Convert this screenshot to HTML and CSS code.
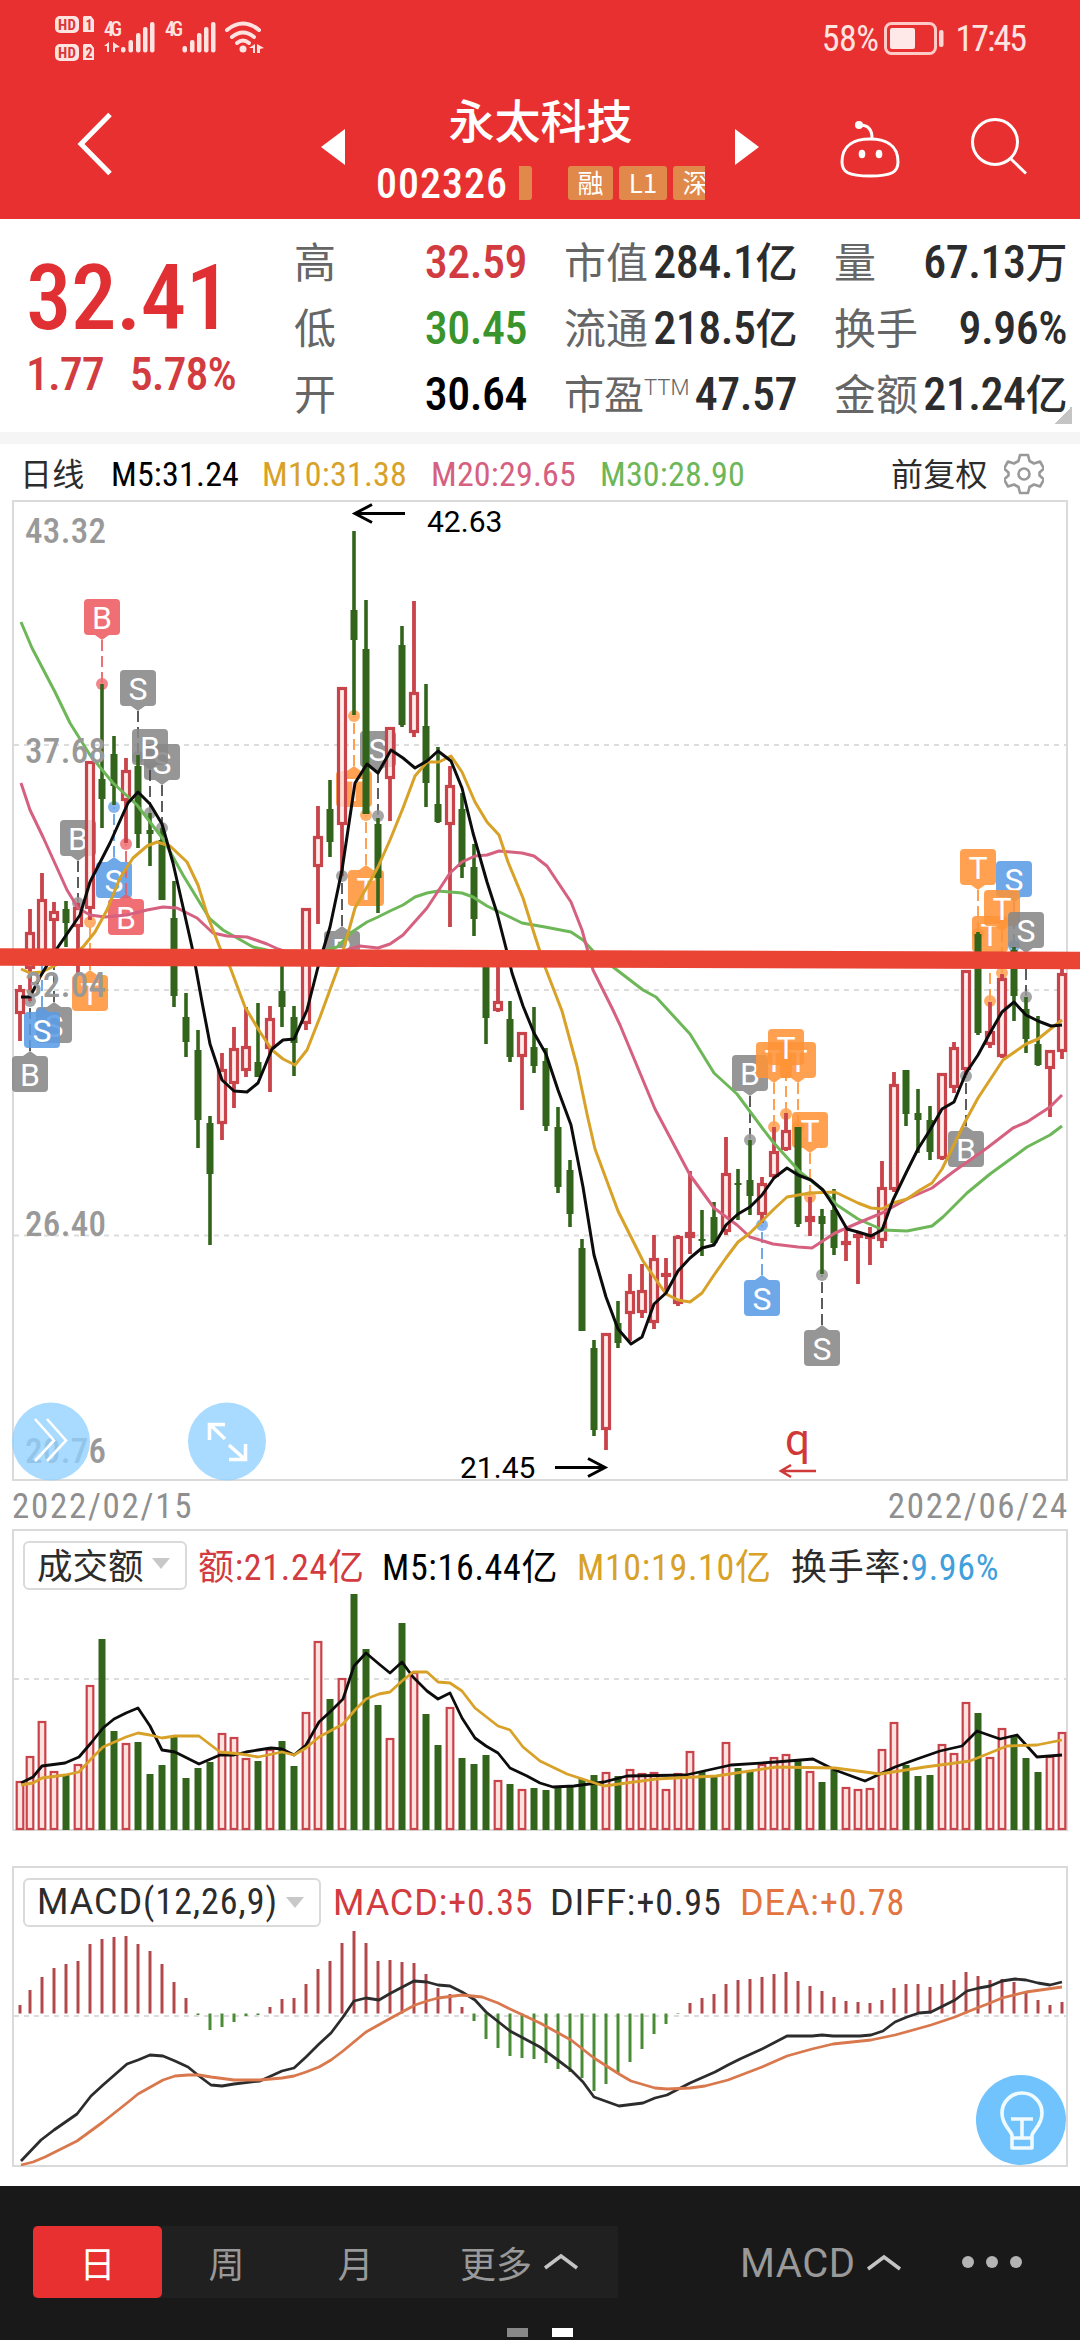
FILE: index.html
```html
<!DOCTYPE html>
<html lang="zh-CN">
<head>
    <meta charset="UTF-8">
    <meta name="viewport" content="width=device-width, initial-scale=1.0">
    <title>永太科技 002326</title>
    <link rel="stylesheet" href="styles.css">
</head>
<body>
    <header class="header">
        <div class="status">
            <svg class="status_left" width="220" height="56" viewBox="50 10 220 56">
                <g fill="#ffe3e0">
                    <rect x="55" y="16" width="24" height="17" rx="5"/>
                    <path d="M84 16h7l3 4v12h-11v-15z"/>
                    <rect x="55" y="44" width="24" height="17" rx="5"/>
                    <path d="M84 44h7l3 4v12h-11v-15z"/>
                    <rect x="121" y="47" width="4.5" height="5.5" rx="2"/>
                    <rect x="128.500" y="40" width="4.500" height="12.500" rx="2"/>
                    <rect x="136" y="33" width="4.500" height="19.500" rx="2"/>
                    <rect x="143" y="27" width="4.500" height="25.500" rx="2"/>
                    <rect x="150" y="22" width="4.500" height="30.500" rx="2"/>
                    <rect x="182.500" y="46" width="4.500" height="6.500" rx="2"/>
                    <rect x="190" y="40" width="4.500" height="12.500" rx="2"/>
                    <rect x="197" y="33" width="4.500" height="19.500" rx="2"/>
                    <rect x="204" y="27" width="4.500" height="25.500" rx="2"/>
                    <rect x="211" y="22" width="4.500" height="30.500" rx="2"/>
                    <circle cx="243" cy="49" r="3.500"/>
                    <path d="M109 42v10h-2v-6h-3zM113 42l7 5-5 1v4h-2z"/>
                    <path d="M255 44v9h-2v-5h-4zM257 44l7 4-4 1v4h-3z"/>
                </g>
                <g fill="none" stroke="#ffe3e0" stroke-width="4" stroke-linecap="round">
                    <path d="M227 30q16-13 32 0"/>
                    <path d="M232 37q11-9 22 0"/>
                    <path d="M237 43q6-5 12 0"/>
                </g>
                <g class="badge_text">
                    <text x="58" y="30" textLength="18">HD</text>
                    <text x="85.500" y="30" font-size="14">1</text>
                    <text x="58" y="58" textLength="18">HD</text>
                    <text x="85.500" y="58" font-size="14">2</text>
                </g>
                <g class="net_text">
                    <text x="104" y="36" textLength="18">4G</text>
                    <text x="165" y="36" textLength="18">4G</text>
                </g>
            </svg>
            <div class="status_right">
                <span class="percent">58%</span>
                <svg width="60" height="34" viewBox="0 0 60 34">
                    <rect x="1.500" y="2.500" width="50" height="30" rx="6" fill="none" stroke="#ffc9c6" stroke-width="3"/>
                    <rect x="6" y="7" width="25" height="21" rx="2" fill="#ffe8e8"/>
                    <rect x="55" y="9" width="4.500" height="17" rx="2" fill="#ffd6d3"/>
                </svg>
                <span class="clock">17:45</span>
            </div>
        </div>
        <div class="title_bar">
            <svg class="back" width="36" height="64" viewBox="0 0 36 64"><path d="M33 2.500L4 32l29 29.500" fill="none" stroke="#fff" stroke-width="5"/></svg>
            <svg class="prev" width="24" height="36" viewBox="0 0 24 36"><path d="M24 0v36L0 18z" fill="#fff"/></svg>
            <div class="stock">
                <h1>永太科技</h1>
                <div class="code_row">
                    <span class="code">002326</span>
                    <i class="tag_end"></i>
                    <span class="tag">融</span>
                    <span class="tag tag_l1">L1</span>
                    <span class="tag tag_cut">深</span>
                </div>
            </div>
            <svg class="next" width="24" height="36" viewBox="0 0 24 36"><path d="M0 0v36l24-18z" fill="#fff"/></svg>
            <svg class="robot" width="62" height="60" viewBox="0 0 62 60">
                <path d="M31 20c14 0 28 5 28 23 0 10-6 14-28 14S3 53 3 43c0-18 14-23 28-23z" fill="none" stroke="#fff" stroke-width="3"/>
                <path d="M21 6c8 0 12 4 12 13" fill="none" stroke="#fff" stroke-width="3"/>
                <circle cx="20" cy="6" r="4" fill="#fff"/>
                <ellipse cx="23" cy="35" rx="3.300" ry="4.300" fill="#fff"/>
                <ellipse cx="40" cy="35" rx="3.300" ry="4.300" fill="#fff"/>
            </svg>
            <svg class="search" width="58" height="58" viewBox="0 0 58 58"><g fill="none" stroke="#fff" stroke-width="3"><circle cx="25" cy="25" r="22.500"/><path d="M40.500 41.500L56 56.500"/></g></svg>
        </div>
    </header>

    <section class="quote">
        <div class="price_box">
            <div class="price">32.41</div>
            <div class="change"><span>1.77</span><span>5.78%</span></div>
        </div>
        <dl class="quote_col">
            <div><dt>高</dt><dd class="red">32.59</dd></div>
            <div><dt>低</dt><dd class="green">30.45</dd></div>
            <div><dt>开</dt><dd class="black">30.64</dd></div>
        </dl>
        <dl class="quote_col">
            <div><dt>市值</dt><dd>284.1<i>亿</i></dd></div>
            <div><dt>流通</dt><dd>218.5<i>亿</i></dd></div>
            <div><dt class="pe">市盈<sup>TTM</sup></dt><dd>47.57</dd></div>
        </dl>
        <dl class="quote_col">
            <div><dt>量</dt><dd>67.13<i>万</i></dd></div>
            <div><dt>换手</dt><dd>9.96%</dd></div>
            <div><dt>金额</dt><dd>21.24<i>亿</i></dd></div>
        </dl>
        <div class="corner"></div>
    </section>

    <div class="ma_row">
        <span class="cjk">日线</span>
        <span class="black">M5:31.24</span>
        <span class="gold">M10:31.38</span>
        <span class="pink">M20:29.65</span>
        <span class="lime">M30:28.90</span>
        <span class="cjk">前复权</span>
        <svg width="40" height="42" viewBox="-20 -21 40 42">
            <path d="M-4-19h8l1.500 6 4.500 2.500 6-2 4 7-4.500 4v3l4.500 4-4 7-6-2-4.500 2.500L4 19h-8l-1.500-6-4.500-2.500-6 2-4-7 4.500-4v-3l-4.500-4 4-7 6 2 4.500-2.500z" fill="none" stroke="#999" stroke-width="2.600" stroke-linejoin="round"/>
            <circle r="5.500" fill="none" stroke="#999" stroke-width="2.600"/>
        </svg>
    </div>

    <svg id="kline" class="kline" width="1080" height="986" viewBox="0 500 1080 986"></svg>

    <div class="dates"><span>2022/02/15</span><span>2022/06/24</span></div>

    <section class="panel volume">
        <svg id="volume" width="1080" height="304" viewBox="0 1529 1080 304"></svg>
        <div class="panel_head">
            <span class="select cjk">成交额<b class="caret"></b></span>
            <span class="v1 red">额:21.24亿</span>
            <span class="v2 black">M5:16.44亿</span>
            <span class="v3 gold">M10:19.10亿</span>
            <span class="v4">换手率:<em>9.96%</em></span>
        </div>
    </section>

    <section class="panel macd">
        <svg id="macd" width="1080" height="303" viewBox="0 1865 1080 303"></svg>
        <div class="panel_head">
            <span class="select"><span class="wide">MACD</span>(12,26,9)<b class="caret"></b></span>
            <span class="m1 red"><span class="wide">MACD:</span>+0.35</span>
            <span class="m2"><span class="wide">DIFF:</span>+0.95</span>
            <span class="m3 orange"><span class="wide">DEA:</span>+0.78</span>
        </div>
    </section>

    <footer class="footer">
        <div class="periods">
            <span class="period active">日</span>
            <span class="period">周</span>
            <span class="period">月</span>
            <span class="period more">更多<svg width="36" height="18" viewBox="0 0 36 18"><path d="M2 15L18 3l16 12" fill="none" stroke="#c4c4c4" stroke-width="3.500"/></svg></span>
        </div>
        <span class="indicator">MACD<svg width="36" height="18" viewBox="0 0 36 18"><path d="M2 15L18 3l16 12" fill="none" stroke="#c4c4c4" stroke-width="3.500"/></svg></span>
        <div class="dots"><i></i><i></i><i></i></div>
        <div class="pager"><i></i><i class="on"></i></div>
    </footer>

    <script>
        // candles: colour, high, body top, body bottom, low
        const candles = [
            ["r",985,989,1014,1041],["r",909,932,969,1001],["r",873,899,958,960],["r",902,911,921,960],["g",901,909,923,947],
            ["r",903,907,927,973],["r",761,761,909,920],["g",684,779,799,828],["g",736,754,786,805],["r",758,770,801,843],
            ["g",755,766,834,848],["g",813,830,834,866],["g",828,840,900,900],["g",881,918,996,1007],["g",993,1017,1042,1057],
            ["g",1030,1050,1120,1148],["g",1116,1123,1174,1245],["r",1053,1069,1124,1140],["r",1027,1048,1084,1108],["r",1007,1046,1071,1077],
            ["g",1003,1062,1077,1077],["r",1006,1018,1049,1092],["g",955,991,1007,1027],["g",1006,1017,1043,1076],["r",908,908,1024,1030],
            ["r",806,836,867,924],["g",780,809,842,857],["r",687,687,825,876],["g",531,610,640,715],["g",600,649,814,814],
            ["g",818,824,878,913],["r",727,727,779,821],["g",626,645,725,727],["r",601,692,733,737],["g",684,726,783,807],
            ["g",747,804,822,823],["r",766,785,825,927],["g",793,809,867,878],["g",844,867,919,936],["g",950,955,1018,1044],
            ["r",955,1001,1011,1012],["g",1001,1019,1057,1062],["r",1032,1032,1057,1110],["g",1007,1047,1066,1073],["g",1048,1061,1126,1131],
            ["g",1107,1127,1187,1193],["g",1160,1170,1214,1227],["g",1239,1248,1331,1331],["g",1340,1348,1430,1436],["r",1333,1333,1430,1450],
            ["g",1301,1323,1343,1348],["r",1274,1291,1314,1341],["r",1264,1290,1313,1318],["r",1235,1258,1323,1329],["r",1258,1273,1277,1291],
            ["r",1235,1236,1304,1306],["r",1171,1232,1238,1254],["g",1210,1239,1241,1256],["g",1202,1217,1243,1244],["r",1137,1173,1232,1235],
            ["g",1169,1183,1185,1220],["g",1140,1180,1196,1215],["r",1177,1183,1215,1223],["r",1127,1151,1177,1178],["r",1113,1130,1150,1151],
            ["g",1127,1127,1224,1227],["r",1197,1216,1222,1236],["g",1209,1216,1224,1274],["g",1189,1210,1248,1255],["r",1228,1241,1243,1261],
            ["r",1233,1234,1237,1284],["r",1227,1234,1239,1265],["r",1161,1187,1241,1248],["r",1072,1084,1190,1192],["g",1070,1070,1114,1126],
            ["g",1089,1113,1120,1153],["g",1106,1120,1152,1160],["r",1073,1073,1159,1160],["r",1042,1047,1088,1093],["r",970,970,1070,1075],
            ["g",932,934,1033,1035],["r",1002,1031,1045,1048],["r",974,978,1057,1058],["g",947,950,996,1021],["g",997,1009,1039,1053],
            ["g",1016,1044,1065,1066],["r",1050,1050,1069,1117],["r",968,973,1052,1059]
        ];
        // markers: letter, colour, x, box top, dot y
        const marks = [
            ["B","#878787",30,1056,1001],["S","#878787",54,1007,960],["S","#5a9ce6",42,1012,960],["T","#ff9437",90,975,922],
            ["B","#878787",78,820,903],["B","#ee5a60",102,599,684],["S","#5a9ce6",114,862,807],["B","#ee5a60",126,899,844],
            ["S","#878787",138,670,757],["S","#878787",162,744,828],["B","#878787",150,729,813],
            ["B","#878787",342,931,876],["T","#ff9437",354,771,716],["T","#ff9437",366,870,815],["S","#878787",378,731,816],
            ["B","#878787",750,1055,1140],["S","#5a9ce6",762,1280,1225],["T","#ff9437",774,1042,1127],["T","#ff9437",798,1042,1127],
            ["T","#ff9437",786,1029,1114],["T","#ff9437",810,1112,1197],["S","#878787",822,1330,1275],
            ["B","#878787",966,1131,1076],["T","#ff9437",978,849,934],["S","#5a9ce6",1014,861,946],["T","#ff9437",990,916,1001],
            ["T","#ff9437",1002,890,973],["S","#878787",1026,912,997]
        ];
        const ma = {
            "#6db758": "21,622 32,648 55,692 70,723 90,755 113,783 137,805 163,839 183,875 200,903 210,919 223,930 253,947 290,955 320,952 337,947 352,932 367,922 378,917 390,911 403,905 415,897 427,893 438,891 462,893 473,897 487,906 522,923 545,927 571,932 583,940 593,951 613,967 643,990 656,997 690,1034 714,1073 737,1094 760,1125 773,1142 800,1172 823,1190 837,1205 858,1219 883,1230 907,1231 932,1226 943,1217 967,1193 990,1174 1027,1147 1050,1135 1062,1126",
            "#d6607f": "21,783 30,810 43,837 67,890 78,908 90,915 105,917 127,915 147,910 163,907 177,908 197,918 213,933 227,936 247,937 267,944 278,949 300,957 330,955 360,946 378,948 390,944 403,935 427,908 450,873 462,862 475,856 487,855 499,851 522,853 534,856 547,866 571,902 582,930 593,970 612,1008 620,1025 655,1109 690,1175 714,1208 737,1225 750,1237 773,1244 798,1247 812,1248 835,1233 858,1223 882,1213 907,1199 932,1188 953,1172 987,1148 1013,1128 1027,1122 1050,1107 1062,1095",
            "#d8a127": "21,969 30,973 42,972 50,968 66,960 83,947 95,932 107,910 120,878 133,858 147,846 157,842 170,846 187,862 198,885 208,917 220,948 230,967 245,1007 260,1032 272,1050 283,1059 295,1065 307,1050 320,1017 338,968 347,937 355,908 367,887 378,867 390,840 403,808 415,776 427,762 439,762 451,756 462,772 475,802 487,822 499,835 508,862 523,898 533,930 545,967 562,1011 577,1066 587,1114 595,1149 618,1211 643,1261 666,1294 678,1300 690,1302 702,1293 714,1275 726,1258 738,1242 750,1233 774,1209 787,1197 810,1193 835,1192 858,1203 871,1208 882,1209 893,1203 907,1199 920,1190 932,1183 942,1169 948,1157 965,1122 978,1098 1003,1060 1026,1044 1038,1039 1053,1027 1062,1020",
            "#0c0c0c": "21,997 30,997 40,977 58,947 80,915 90,882 110,843 128,803 138,792 150,804 162,824 173,863 183,907 192,947 202,1002 210,1044 222,1080 234,1091 247,1092 258,1083 272,1049 283,1040 294,1039 307,1010 318,967 330,927 342,870 355,783 367,764 378,773 391,750 403,758 415,768 427,761 438,751 451,761 462,788 473,833 487,882 497,913 506,948 512,973 523,1006 534,1033 546,1054 558,1090 571,1125 583,1187 594,1255 606,1297 618,1329 631,1344 642,1337 654,1304 666,1293 678,1271 690,1258 702,1248 714,1245 726,1225 738,1214 750,1207 762,1195 774,1178 787,1168 798,1175 811,1180 823,1190 835,1208 847,1229 858,1232 871,1236 882,1230 893,1200 906,1173 918,1149 930,1130 942,1109 954,1102 966,1073 978,1055 990,1033 1002,1012 1014,1002 1026,1015 1038,1021 1051,1026 1062,1025"
        };
        const vol = [1782,1757,1722,1772,1774,1765,1686,1639,1731,1744,1742,1774,1765,1736,1778,1768,1762,1734,1738,1759,1761,1750,
            1741,1766,1713,1642,1699,1679,1594,1649,1705,1739,1623,1673,1714,1745,1708,1758,1764,1755,1781,1784,1790,1788,
            1790,1788,1785,1779,1775,1773,1776,1770,1774,1773,1790,1774,1752,1772,1776,1743,1768,1770,1765,1758,1755,1760,
            1772,1782,1770,1788,1790,1789,1750,1723,1765,1776,1775,1745,1754,1703,1713,1758,1729,1735,1758,1772,1757,1733];
        const volMa = {
            "#0c0c0c": "21,1783 33,1777 42,1766 65,1763 79,1757 91,1743 103,1728 114,1719 126,1713 138,1708 150,1726 162,1750 175,1752 199,1764 220,1755 234,1755 246,1752 258,1750 271,1748 282,1749 294,1755 306,1745 319,1722 331,1711 343,1699 354,1666 366,1653 379,1664 390,1673 402,1662 413,1677 427,1691 438,1699 450,1693 462,1718 475,1738 486,1746 498,1753 510,1768 527,1776 540,1783 553,1787 574,1786 604,1782 627,1776 686,1775 731,1765 776,1762 813,1759 835,1770 865,1781 895,1767 917,1759 940,1751 962,1746 977,1731 1000,1739 1017,1735 1037,1757 1062,1755",
            "#d8a127": "21,1785 33,1783 42,1778 65,1775 79,1772 91,1759 103,1747 126,1737 138,1733 150,1735 162,1738 175,1736 199,1736 220,1752 241,1754 258,1757 282,1752 294,1755 306,1748 319,1737 343,1724 355,1710 366,1699 379,1694 390,1692 402,1681 413,1672 427,1672 438,1682 450,1683 462,1691 475,1708 498,1726 510,1730 523,1747 540,1761 567,1774 604,1786 656,1779 716,1776 776,1767 835,1768 880,1774 925,1767 970,1761 1007,1746 1037,1745 1062,1740"
        };
        const macd = [2005,1990,1977,1968,1964,1961,1944,1939,1937,1936,1944,1951,1964,1982,1998,2015,2030,2027,2022,2016,2015,2007,
            1999,1998,1984,1969,1961,1943,1931,1943,1961,1960,1962,1963,1974,1988,1994,2007,2021,2039,2048,2056,2058,2059,
            2063,2069,2072,2078,2091,2084,2074,2062,2049,2034,2024,2014,2003,1998,1994,1984,1980,1979,1977,1974,1972,1981,
            1986,1991,1997,2001,2002,2003,2000,1988,1984,1984,1987,1984,1980,1972,1976,1980,1979,1982,1991,2000,2005,2002];
        const macdLines = {
            "#2c2c2c": "21,2161 41,2140 54,2130 77,2114 91,2096 103,2085 127,2064 138,2060 150,2055 163,2056 175,2061 188,2067 199,2076 211,2085 222,2086 234,2084 260,2081 282,2071 294,2068 306,2057 319,2044 331,2033 343,2017 354,2001 366,1998 379,2000 391,1993 414,1981 427,1982 438,1985 450,1986 462,1992 475,2000 486,2012 510,2031 540,2047 559,2061 571,2070 583,2082 594,2097 619,2106 643,2103 655,2098 667,2095 690,2083 715,2072 728,2065 740,2059 762,2049 787,2036 812,2036 822,2035 833,2036 860,2036 871,2035 883,2031 895,2022 907,2017 919,2013 931,2012 955,2000 967,1991 979,1988 990,1986 1002,1981 1015,1979 1026,1980 1038,1983 1050,1985 1062,1982",
            "#d9774d": "21,2165 33,2162 45,2157 77,2141 103,2122 127,2103 138,2094 163,2080 175,2076 188,2075 199,2075 211,2077 234,2080 260,2080 282,2078 294,2076 306,2072 319,2067 331,2060 343,2051 366,2032 391,2018 415,2005 427,2001 438,1998 462,1995 482,1997 498,2003 510,2009 540,2023 571,2040 594,2058 619,2074 631,2081 655,2088 667,2089 690,2088 705,2086 728,2080 762,2067 787,2056 812,2049 833,2044 871,2040 895,2035 931,2025 955,2017 967,2012 990,2003 1002,1998 1026,1992 1062,1987"
        };

        const RED = "#c9434a";
        const GREEN = "#32651b";

        function xAt(i) {
            return i === 0 ? 20 : 18 + 12 * i;
        }
        function lines(set, width) {
            let s = "";
            for (const color in set) {
                s += `<polyline points="${set[color]}" fill="none" stroke="${color}" stroke-width="${width}" stroke-linejoin="round"/>`;
            }
            return s;
        }
        function dash(y) {
            return `<path d="M14 ${y}H1066" stroke="#dcdcdc" stroke-width="2" stroke-dasharray="5 5"/>`;
        }
        function frame(y1, y2) {
            return `<rect x="13" y="${y1}" width="1054" height="${y2 - y1}" fill="none" stroke="#dadada" stroke-width="2"/>`;
        }

        // candlestick chart
        let k = frame(501, 1480) + dash(745) + dash(990) + dash(1235.5);
        marks.forEach(([letter, color, x, top, dot]) => {
            const down = dot > top;
            const tip = down ? `M${x - 7} ${top + 36}h14l-7 5z` : `M${x - 7} ${top}h14l-7-5z`;
            const from = down ? top + 41 : top - 5;
            k += `<g opacity="0.87"><path d="M${x} ${from}V${dot}" stroke="${color === "#878787" ? "#444" : color}" stroke-width="2" stroke-dasharray="11 5"/>`;
            k += `<circle cx="${x}" cy="${dot}" r="6" fill="${color}" opacity="0.85"/>`;
            k += `<rect x="${x - 18}" y="${top}" width="36" height="36" rx="4" fill="${color}"/><path d="${tip}" fill="${color}"/></g>`;
            k += `<text class="mark" x="${x}" y="${top + 30}">${letter}</text>`;
        });
        candles.forEach(([c, high, top, bottom, low], i) => {
            const x = xAt(i);
            if (c === "g") {
                k += `<path d="M${x} ${high}V${low}" stroke="${GREEN}" stroke-width="3.6"/>`;
                k += `<rect x="${x - 3.5}" y="${top}" width="7" height="${bottom - top}" fill="${GREEN}"/>`;
            } else {
                k += `<path d="M${x} ${high}V${top}M${x} ${bottom}V${low}" stroke="${RED}" stroke-width="3.8"/>`;
                k += `<rect x="${x - 3.5}" y="${top + 1.5}" width="7" height="${Math.max(bottom - top - 3, 1)}" fill="#ffe9e6" fill-opacity="0.8" stroke="${RED}" stroke-width="3.2"/>`;
            }
        });
        k += lines(ma, 3);
        [["43.32", 543], ["37.68", 763], ["32.04", 997], ["26.40", 1236], ["20.76", 1463]].forEach(([t, y]) => {
            k += `<text class="axis" x="25" y="${y}" textLength="81">${t}</text>`;
        });
        k += `<g fill="none" stroke="#000" stroke-width="3"><path d="M405 513.500H355M372 504.500L355 513.500L372 522.500"/><path d="M555 1467.500H605M588 1458.500L605 1467.500L588 1476.500"/></g>`;
        k += `<text class="peak" x="427" y="532">42.63</text><text class="peak" x="460" y="1478">21.45</text>`;
        k += `<text class="q" x="785" y="1455">q</text><path d="M816 1471H781M791 1465L781 1471L791 1477" fill="none" stroke="#cf3a38" stroke-width="2.6"/>`;
        k += `<path d="M0 957L1080 960.500" stroke="#ea4435" stroke-width="17.500"/>`;
        k += `<circle cx="51" cy="1441.500" r="39" fill="#8fd1ff" fill-opacity="0.78"/><path d="M35 1419L54 1440.500L35 1461M47 1419L66 1440.500L47 1461" fill="none" stroke="#fff" stroke-width="2.6"/>`;
        k += `<circle cx="227" cy="1441.500" r="39" fill="#8fd1ff" fill-opacity="0.78"/><path d="M225 1439L210 1424.500M209.500 1440V1424.500H225M229 1445L245 1459.500M245.500 1444V1459.500H229" fill="none" stroke="#fff" stroke-width="3.6"/>`;
        document.getElementById("kline").innerHTML = k;

        // turnover bars
        let v = frame(1530, 1830) + dash(1679);
        vol.forEach((top, i) => {
            const x = xAt(i);
            if (candles[i][0] === "g") {
                v += `<rect x="${x - 3.5}" y="${top}" width="7" height="${1830 - top}" fill="${GREEN}"/>`;
            } else {
                v += `<rect x="${x - 3.3}" y="${top}" width="6.6" height="${1829 - top}" fill="#ffe2de" stroke="${RED}" stroke-width="2.2"/>`;
            }
        });
        document.getElementById("volume").innerHTML = v + lines(volMa, 2.8);

        // macd histogram
        let m = frame(1867, 2166) + dash(2016);
        macd.forEach((y, i) => {
            const color = y < 2013 ? "#b3484c" : "#4a8c35";
            m += `<path d="M${xAt(i)} 2013.500V${y}" stroke="${color}" stroke-width="3"/>`;
        });
        m += lines(macdLines, 2.8);
        m += `<circle cx="1021" cy="2120" r="45" fill="#70c3fd"/>`;
        m += `<path d="M1012 2148V2135C1010 2129 1002 2125 1002 2113A20 20 0 0 1 1042 2113C1042 2125 1034 2129 1032 2135V2148ZM1012 2138H1032M1022 2138V2119M1011 2119H1033" fill="none" stroke="#effbff" stroke-width="3.6" stroke-linejoin="round"/>`;
        document.getElementById("macd").innerHTML = m;
    </script>
</body>
</html>
```
FILE: styles.css
```css
* {
    box-sizing: border-box;
}
html, body {
    margin: 0;
    padding: 0;
}
body {
    width: 1080px;
    height: 2340px;
    display: flex;
    flex-direction: column;
    background-color: #fff;
    color: #2c2c2c;
    font-family: "Roboto Condensed", "Noto Sans CJK SC", sans-serif;
    overflow: hidden;
}
svg {
    display: block;
    flex: none;
}
i, em {
    font-style: normal;
}
.cjk {
    font-family: "Noto Sans CJK SC", sans-serif;
}
.wide {
    font-family: Roboto, sans-serif;
}
.red { color: #d23b3f; }
.green { color: #3a942c; }
.black { color: #000; }
.gold { color: #d8a127; }
.pink { color: #d6607f; }
.lime { color: #6db758; }
.orange { color: #e2753f; }

/* header */
.header {
    height: 219px;
    background-color: #e83030;
    color: #fff;
}
.status {
    display: flex;
    justify-content: space-between;
    height: 72px;
    padding: 10px 55px 0 50px;
}
.status_right {
    display: flex;
    align-items: center;
    height: 56px;
    font-size: 36px;
    color: #ffe3e0;
}
.percent {
    letter-spacing: -0.500px;
    margin: 2px 5px 0 0;
}
.clock {
    margin: 2px 0 0 12px;
    letter-spacing: -2px;
}
.badge_text {
    font-size: 15px;
    font-weight: 700;
    fill: #d9383a;
}
.net_text {
    font-size: 20px;
    font-weight: 500;
    fill: #ffe3e0;
}
.title_bar {
    display: flex;
    height: 147px;
    padding-left: 77px;
}
.back { margin-top: 40px; }
.prev { margin: 57px 0 0 208px; }
.next { margin: 57px 0 0 30px; }
.robot { margin: 47px 0 0 80px; }
.search { margin: 45px 0 0 69px; }
.stock {
    width: 329px;
    margin-left: 31px;
    overflow: hidden;
}
h1 {
    margin: 14px 0 0;
    line-height: 64px;
    font-family: "Noto Sans CJK SC", sans-serif;
    font-size: 46px;
    font-weight: 500;
    text-align: center;
}
.code_row {
    display: flex;
    align-items: center;
    height: 50px;
    margin-top: 8px;
}
.code {
    flex: none;
    width: 143px;
    font-size: 42px;
    font-weight: 500;
    letter-spacing: 1px;
}
.tag_end {
    flex: none;
    width: 13px;
    height: 34px;
    margin-right: 36px;
    background-color: #e0894a;
    border-radius: 0 3px 3px 0;
}
.tag {
    flex: none;
    width: 45px;
    height: 34px;
    margin-right: 6px;
    border-radius: 3px;
    background-color: #e0894a;
    font-family: "Noto Sans CJK SC", sans-serif;
    font-size: 26px;
    line-height: 32px;
    text-align: center;
}
.tag_l1 { width: 48px; }

/* quote */
.quote {
    position: relative;
    display: flex;
    height: 225px;
    padding: 10px 0 0 26px;
    border-bottom: 12px solid #f5f5f5;
}
.price_box {
    flex: none;
    width: 268px;
    color: #e03033;
}
.price {
    margin-top: 15px;
    height: 88px;
    font-size: 91px;
    font-weight: 500;
    line-height: 108px;
    letter-spacing: -0.500px;
}
.change {
    display: flex;
    gap: 26px;
    margin-top: 15px;
    font-size: 46px;
    line-height: 54px;
    font-weight: 500;
    letter-spacing: -1px;
    color: #d23b3f;
}
.quote_col {
    flex: none;
    width: 233px;
    margin: 0 37px 0 0;
}
.quote_col div {
    display: flex;
    justify-content: space-between;
    align-items: center;
    height: 66px;
    white-space: nowrap;
}
dt {
    margin-top: -5px;
    font-family: "Noto Sans CJK SC", sans-serif;
    font-size: 42px;
    color: #666;
}
dd {
    margin: 0;
    font-size: 46px;
    font-weight: 500;
    letter-spacing: -0.500px;
}
dd i {
    font-family: "Noto Sans CJK SC", sans-serif;
    font-size: 42px;
    line-height: 1;
}
.pe {
    font-size: 40px;
}
.pe sup {
    position: relative;
    top: -3px;
    font-family: Roboto, sans-serif;
    font-size: 22px;
    font-weight: 300;
    line-height: 1;
    vertical-align: 11px;
}
.corner {
    position: absolute;
    right: 8px;
    bottom: 8px;
    width: 18px;
    height: 18px;
    background: linear-gradient(135deg, transparent 50%, #c4c4c4 50%);
}

/* moving averages */
.ma_row {
    display: grid;
    grid-template-columns: 91px 151px 169px 169px 291px 113px auto;
    align-items: center;
    height: 56px;
    padding: 4px 0 0 20px;
    font-size: 34px;
    letter-spacing: 0.200px;
    white-space: nowrap;
}
.ma_row .cjk {
    margin-top: -4px;
    font-size: 32px;
    letter-spacing: 0.300px;
}

/* charts */
.axis {
    font-size: 35px;
    font-weight: 500;
    fill: #999;
}
.mark {
    font-family: Roboto, sans-serif;
    font-size: 32px;
    fill: #fff;
    text-anchor: middle;
}
.peak {
    font-family: Roboto, sans-serif;
    font-size: 30px;
    fill: #000;
}
.q {
    font-family: Roboto, sans-serif;
    font-size: 44px;
    fill: #cf3a38;
}
.dates {
    display: flex;
    justify-content: space-between;
    align-items: center;
    height: 43px;
    padding: 0 11px 2px 12px;
    font-size: 35px;
    letter-spacing: 1.700px;
    color: #8f8f8f;
}
.panel {
    display: grid;
    font-size: 36px;
    white-space: nowrap;
}
.panel > * {
    grid-area: 1 / 1;
}
.volume { height: 336px; }
.macd { height: 321px; }
.panel_head {
    display: flex;
    align-items: center;
    align-self: start;
    height: 48px;
    margin: 12px 0 0 23px;
}
.macd .panel_head {
    margin-top: 13px;
}
.select {
    display: flex;
    align-items: center;
    height: 49px;
    padding: 0 15px 0 12px;
    border: 2px solid #dadada;
    border-radius: 6px;
    letter-spacing: 1px;
}
.select.cjk {
    width: 164px;
    padding-bottom: 3px;
    line-height: 44px;
    font-size: 35.500px;
    letter-spacing: 0;
}
.macd .select {
    width: 298px;
}
.caret {
    margin-left: auto;
    border: 9px solid transparent;
    border-top: 11px solid #c8c8c8;
    border-bottom: 0;
}
.v1, .v2, .v3, .v4 {
    flex: none;
    margin-top: -3px;
    font-size: 36px;
    letter-spacing: 0.700px;
}
.v1 { width: 184px; margin-left: 11px; }
.v2 { width: 195px; }
.v3 { width: 214px; }
.v4 em { color: #3fa0dc; }
.m1, .m2, .m3 {
    margin-top: 2px;
    letter-spacing: 0.900px;
}
.m1 { width: 217px; margin-left: 12px; }
.m2 { width: 190px; }

/* bottom bar */
.footer {
    display: grid;
    grid-template-columns: 585px 162px auto;
    align-content: start;
    column-gap: 122px;
    height: 154px;
    padding: 40px 0 0 33px;
    background-color: #191919;
    color: #999;
}
.periods {
    display: flex;
    height: 72px;
    background-color: #202020;
}
.period {
    width: 129px;
    border-radius: 5px;
    font-family: "Noto Sans CJK SC", sans-serif;
    font-size: 36px;
    line-height: 72px;
    text-align: center;
}
.active {
    background-color: #e83030;
    color: #fff;
}
.more {
    display: flex;
    align-items: center;
    width: 198px;
    padding-left: 40px;
    gap: 11px;
}
.indicator {
    display: flex;
    align-items: center;
    justify-content: space-between;
    height: 72px;
    padding-top: 2px;
    font-family: Roboto, sans-serif;
    font-size: 40px;
    letter-spacing: 0.500px;
}
.dots {
    display: flex;
    align-items: center;
    gap: 12px;
    margin-left: -62px;
}
.dots i {
    width: 12px;
    height: 12px;
    border-radius: 50%;
    background-color: #b4b4b4;
}
.pager {
    grid-column: 1 / -1;
    display: flex;
    gap: 24px;
    margin: 30px 0 0 474px;
}
.pager i {
    width: 21px;
    height: 9px;
    background-color: #888;
}
.pager .on {
    background-color: #fff;
}
```
